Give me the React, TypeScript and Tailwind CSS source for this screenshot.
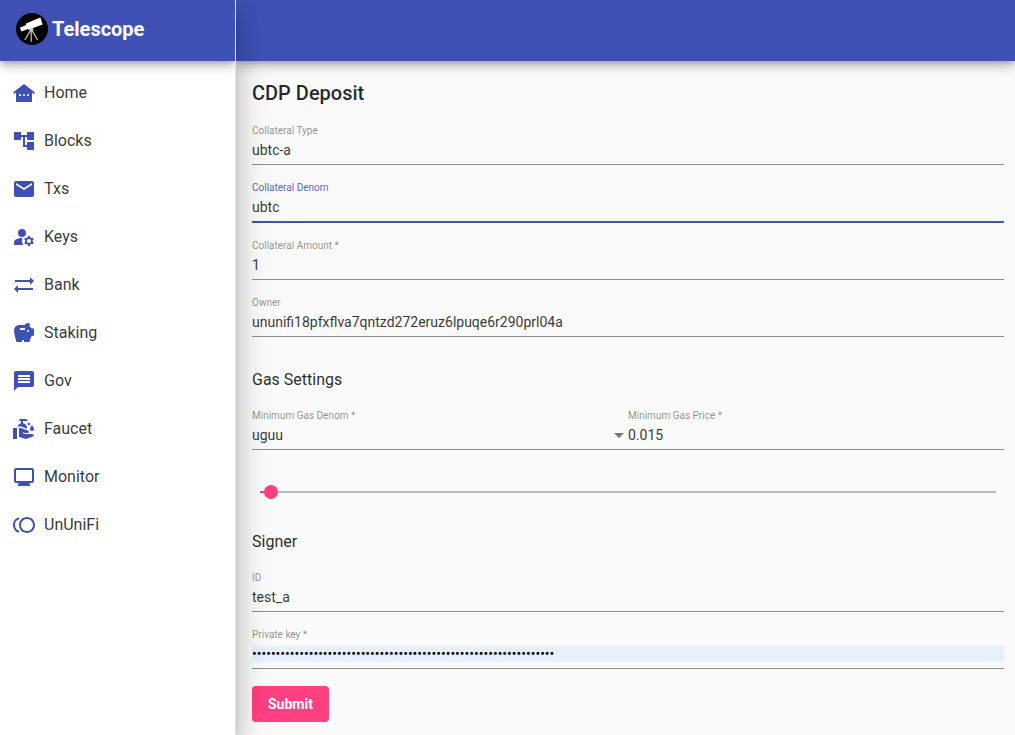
import { useState } from 'react'
import type { ReactNode } from 'react'
import type { IconType } from 'react-icons'
import {
  MdAccountTree,
  MdCleanHands,
  MdEmail,
  MdManageAccounts,
  MdMessage,
  MdMonitor,
  MdOtherHouses,
  MdSavings,
  MdSyncAlt,
  MdToll,
} from 'react-icons/md'

const menu: { label: string; href: string; icon: IconType }[] = [
  { label: 'Home', href: '#/', icon: MdOtherHouses },
  { label: 'Blocks', href: '#/blocks', icon: MdAccountTree },
  { label: 'Txs', href: '#/txs', icon: MdEmail },
  { label: 'Keys', href: '#/keys', icon: MdManageAccounts },
  { label: 'Bank', href: '#/bank', icon: MdSyncAlt },
  { label: 'Staking', href: '#/staking', icon: MdSavings },
  { label: 'Gov', href: '#/gov', icon: MdMessage },
  { label: 'Faucet', href: '#/faucet', icon: MdCleanHands },
  { label: 'Monitor', href: '#/monitor', icon: MdMonitor },
  { label: 'UnUniFi', href: '#/ununifi', icon: MdToll },
]

const headerShadow =
  'shadow-[0_3px_5px_-1px_rgba(0,0,0,0.2),0_6px_10px_0_rgba(0,0,0,0.14),0_1px_18px_0_rgba(0,0,0,0.12)]'

const control = 'block h-4 w-full appearance-none bg-transparent p-0 text-sm leading-4 text-black/80 outline-none'

function Logo() {
  return (
    <svg viewBox="0 0 32 32" className="size-8 shrink-0" aria-hidden="true">
      <circle cx="16" cy="16" r="16" fill="#000" />
      <path d="M3.8 14.8 10.2 12 10 10.6 24.4 4.6 26.6 11.6 12.4 16.8 11.8 16 5.6 18.4Z" fill="#fff" />
      <path d="M13.4 16.4 17 15 17.4 17.8 14 18.2Z" fill="#ddd" />
      <path d="M14.4 17.6 8.8 27M15.2 17.4V28.8M16.2 17.6 21.6 27" stroke="#bbb" strokeWidth="1.3" fill="none" />
    </svg>
  )
}

type FieldProps = { id: string; label: string; focused?: boolean; children: ReactNode }

function Field({ id, label, focused, children }: FieldProps) {
  return (
    <div className={focused ? 'border-b-2 border-[#3f51b5] pb-1.5' : 'border-b border-[#8f8f8f] pb-1.5'}>
      <label
        htmlFor={id}
        className={
          focused
            ? 'mb-[5px] block text-[10px] leading-3 text-[#3f51b5]/90'
            : 'mb-[5px] block text-[10px] leading-3 text-black/45'
        }
      >
        {label}
      </label>
      {children}
    </div>
  )
}

export default function App() {
  const [gasPrice, setGasPrice] = useState('0.015')

  return (
    <div className="flex min-h-screen bg-[#fafafa] font-[Roboto,sans-serif] text-black/85">
      <aside className="z-10 w-[236px] shrink-0 border-r border-[#e0e0e0] bg-white shadow-[0_8px_10px_-5px_rgba(0,0,0,0.2),0_16px_24px_2px_rgba(0,0,0,0.14),0_6px_30px_5px_rgba(0,0,0,0.12)]">
        <div className="overflow-hidden pb-5">
          <div className={`flex h-[61px] items-center gap-1 bg-[#3f51b5] px-4 pb-[3px] text-white ${headerShadow}`}>
            <Logo />
            <span className="text-xl font-bold">Telescope</span>
          </div>
          <nav className="pt-2">
            {menu.map(({ label, href, icon: Icon }) => (
              <a key={label} href={href} className="flex h-12 items-center gap-2 px-3 text-black/80">
                <Icon className="size-6 text-[#3f51b5]" />
                <span>{label}</span>
              </a>
            ))}
          </nav>
        </div>
      </aside>

      <div className="min-w-0 flex-1">
        <header className={`h-[61px] bg-[#3f51b5] ${headerShadow}`} />
        <main className="pt-4 pr-[11px] pb-3 pl-4">
          <h2 className="text-xl leading-8 font-medium">CDP Deposit</h2>
          <form onSubmit={(e) => e.preventDefault()}>
            <div className="mt-4 flex flex-col gap-[17px]">
              <Field id="type" label="Collateral Type">
                <input id="type" className={control} defaultValue="ubtc-a" />
              </Field>
              <Field id="denom" label="Collateral Denom" focused>
                <input id="denom" className={control} defaultValue="ubtc" />
              </Field>
              <Field id="amount" label="Collateral Amount *">
                <input id="amount" className={control} inputMode="numeric" defaultValue="1" />
              </Field>
              <Field id="owner" label="Owner">
                <input id="owner" className={control} defaultValue="ununifi18pfxflva7qntzd272eruz6lpuqe6r290prl04a" />
              </Field>
            </div>

            <h3 className="mt-[31px] leading-6">Gas Settings</h3>
            <div className="mt-[18px] grid grid-cols-2">
              <Field id="gas-denom" label="Minimum Gas Denom *">
                <div className="flex items-center">
                  <select id="gas-denom" className={control} defaultValue="uguu">
                    <option>uguu</option>
                  </select>
                  <svg viewBox="0 0 10 5" className="mx-1 h-[5px] w-2.5 shrink-0" aria-hidden="true">
                    <path d="M0 0h10L5 5z" fill="#757575" />
                  </svg>
                </div>
              </Field>
              <Field id="gas-price" label="Minimum Gas Price *">
                <input
                  id="gas-price"
                  className={control}
                  value={gasPrice}
                  onChange={(e) => setGasPrice(e.target.value)}
                />
              </Field>
            </div>

            {/* track sits behind the range input in the same grid cell */}
            <div className="mt-[18px] grid h-12 items-center">
              <div className="col-start-1 row-start-1 mx-2 h-0.5 bg-[#b8b8b8]">
                <div className="h-full bg-[#ff4081]" style={{ width: `${Number(gasPrice) * 100}%` }} />
              </div>
              <input
                type="range"
                aria-label="Gas price"
                min="0"
                max="1"
                step="0.001"
                value={gasPrice}
                onChange={(e) => setGasPrice(e.target.value)}
                className="col-start-1 row-start-1 mx-px h-3.5 appearance-none bg-transparent [&::-webkit-slider-thumb]:size-3.5 [&::-webkit-slider-thumb]:appearance-none [&::-webkit-slider-thumb]:rounded-full [&::-webkit-slider-thumb]:bg-[#ff4081]"
              />
            </div>

            <h3 className="mt-3.5 leading-6">Signer</h3>
            <div className="mt-[18px] flex flex-col gap-[17px]">
              <Field id="key-id" label="ID">
                <input id="key-id" className={control} defaultValue="test_a" />
              </Field>
              <Field id="private-key" label="Private key *">
                <input
                  id="private-key"
                  type="password"
                  className="block h-4 w-full bg-[#e8f0fe] p-0 text-sm leading-4 text-black outline-none"
                  defaultValue={'0'.repeat(64)}
                />
              </Field>
            </div>

            <button type="submit" className="mt-[17px] h-9 rounded bg-[#ff4081] px-4 text-sm font-bold text-white">
              Submit
            </button>
          </form>
        </main>
      </div>
    </div>
  )
}
